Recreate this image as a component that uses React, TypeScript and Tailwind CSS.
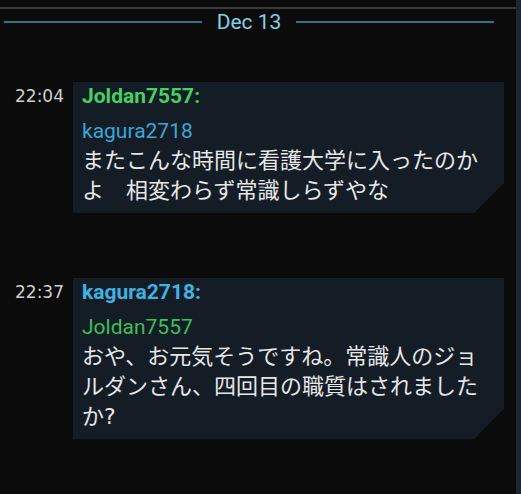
import React from "react";

interface MessageProps {
  time: string;
  author: string;
  authorColor: string;
  replyTo: string;
  replyColor: string;
  text: string;
}

const latin = { fontFamily: 'Roboto, "Noto Sans CJK JP", sans-serif' };

const Message: React.FC<MessageProps> = (props) => {
  return (
    <div className="flex items-start">
      <div className="w-[64px] pt-[4px] text-right text-[17px] leading-[20px] text-[#cfcfcf]">
        {props.time}
      </div>
      <div className="ml-[9px] w-[431px] bg-[#141d26] pt-[4px] pb-[7px] pl-[9px] pr-[20px] [clip-path:polygon(0_0,100%_0,100%_calc(100%-30px),calc(100%-30px)_100%,0_100%)]">
        <div
          className={`text-[21px] font-bold leading-[20px] ${props.authorColor}`}
          style={latin}
        >
          {props.author}:
        </div>
        <div
          className={`mt-[10px] text-[21px] leading-[30px] ${props.replyColor}`}
          style={latin}
        >
          {props.replyTo}
        </div>
        <div className="text-[22px] leading-[30px] text-[#e6e6e6]">{props.text}</div>
      </div>
    </div>
  );
};

const App: React.FC = () => {
  return (
    <div
      className="flex h-[494px] w-[521px] bg-[#0b0b0b]"
      style={{ fontFamily: '"DejaVu Sans", "Noto Sans CJK JP", sans-serif' }}
    >
      <div className="flex-1 pt-[7px]">
        <div className="h-[2px] bg-[#3a3a3a]" />
        <div className="mt-[1px] flex items-center pl-[4px] pr-[22px]">
          <div className="h-[2px] flex-1 bg-[#2e7488]" />
          <span
            className="mx-[15px] text-[21px] leading-[24px] text-[#7fd2ea]"
            style={latin}
          >
            Dec 13
          </span>
          <div className="h-[2px] flex-1 bg-[#2e7488]" />
        </div>

        <div className="mt-[48px] flex flex-col gap-[65px]">
          <Message
            time="22:04"
            author="Joldan7557"
            authorColor="text-[#45d160]"
            replyTo="kagura2718"
            replyColor="text-[#3aa6d6]"
            text="またこんな時間に看護大学に入ったのかよ　相変わらず常識しらずやな"
          />
          <Message
            time="22:37"
            author="kagura2718"
            authorColor="text-[#3fb2e2]"
            replyTo="Joldan7557"
            replyColor="text-[#3cbf58]"
            text="おや、お元気そうですね。常識人のジョルダンさん、四回目の職質はされましたか?"
          />
        </div>
      </div>
      <div className="w-[5px] bg-[#1b2633]" />
    </div>
  );
};

export default App;
